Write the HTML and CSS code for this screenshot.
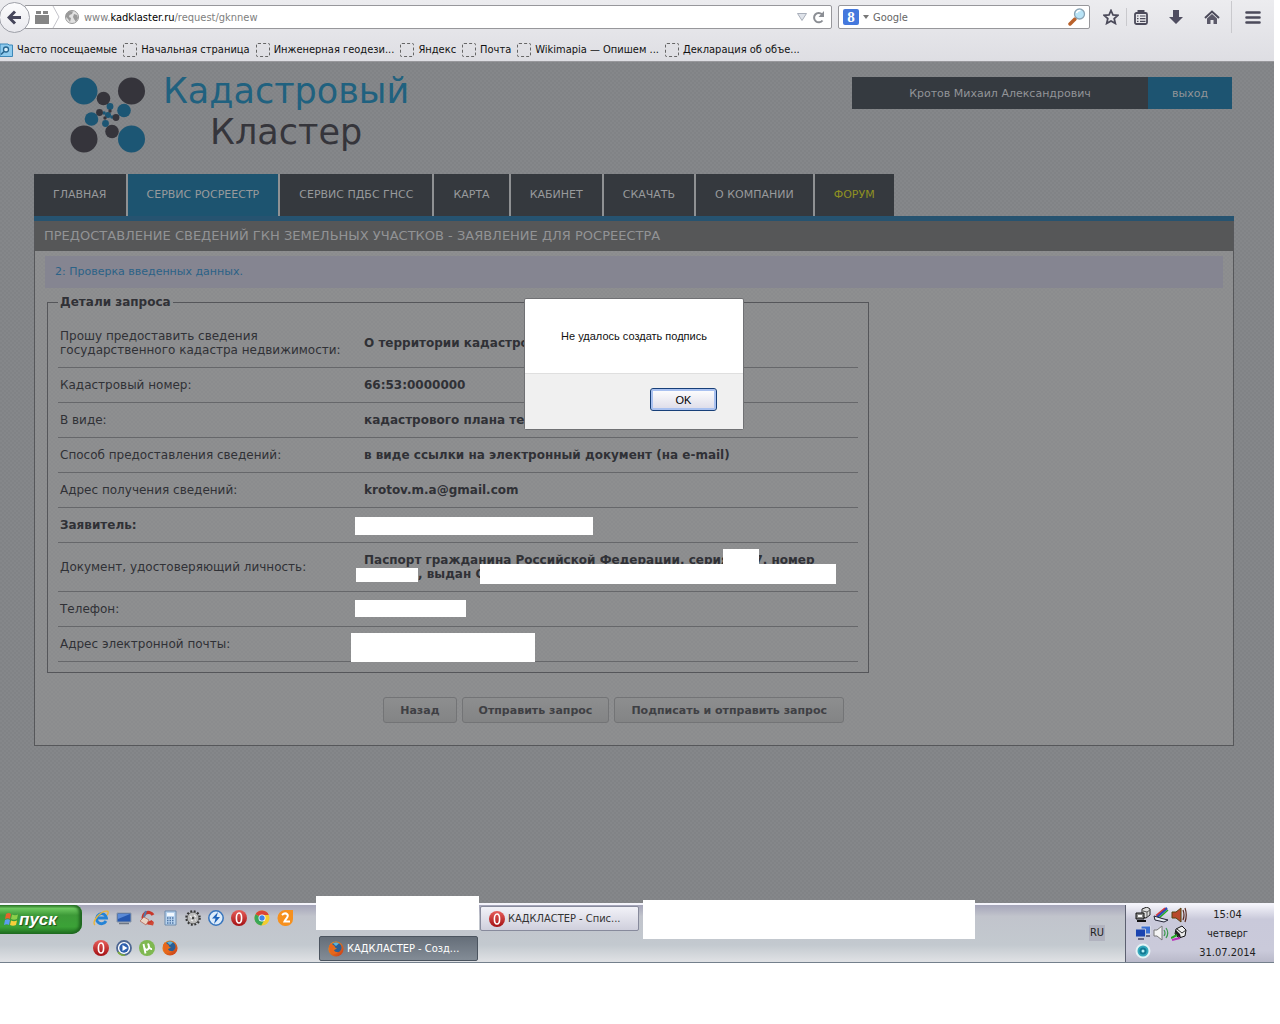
FILE: index.html
```html
<!DOCTYPE html>
<html lang="ru">
<head>
  <meta charset="UTF-8">
  <meta name="viewport" content="width=device-width, initial-scale=1.0">
  <title>Кадастровый Кластер</title>
  <link rel="stylesheet" href="styles.css">
</head>
<body>

  <!-- shapes used more than once -->
  <svg class="defs" width="0" height="0" aria-hidden="true">
    <defs>
      <linearGradient id="redShade" x1="0" y1="0" x2="0" y2="1">
        <stop offset="0" stop-color="#e8605c"/>
        <stop offset="1" stop-color="#a30f12"/>
      </linearGradient>
      <linearGradient id="foxShade" x1="0" y1="0" x2="1" y2="1">
        <stop offset="0" stop-color="#f4a21f"/>
        <stop offset="1" stop-color="#c9361a"/>
      </linearGradient>
      <symbol id="opera" viewBox="0 0 16 16">
        <circle cx="8" cy="8" r="8" fill="url(#redShade)"/>
        <ellipse cx="8" cy="8" rx="2.6" ry="5" fill="none" stroke="#fff" stroke-width="1.6"/>
      </symbol>
      <symbol id="firefox" viewBox="0 0 16 16">
        <circle cx="8" cy="8" r="7.6" fill="url(#foxShade)"/>
        <path d="M4 3C7 .2 13 1.500 13.500 6c.3 3-2 5.500-5 5.300C6 11 5.500 9 7 8.500L9 7.800 6.500 6z" fill="#2c5f94"/>
        <path d="M5 2.500q3-2 6 0L8 5z" fill="#5fb4d8"/>
        <path d="M1 5l2-3 1.500 2L7 5 5.500 7.500C5 10 7 11.500 10 11c-2 3-7 2.500-8.500-1z" fill="#e8661b"/>
      </symbol>
    </defs>
  </svg>

  <div class="screen">

    <header class="browser">
      <div class="toolbar">
        <button class="back" aria-label="Назад">
          <svg width="15" height="15" viewBox="0 0 15 15"><path d="M8 1.500L2 7.500l6 6M2.500 7.500H14" fill="none" stroke="#45455a" stroke-width="3"/></svg>
        </button>
        <div class="urlbar">
          <svg class="tabs-icon" width="14" height="13" viewBox="0 0 14 13"><path d="M1 0h5v3H1zM8 0h5v3H8zM0 4h14v9H0z" fill="#858585"/></svg>
          <svg width="8" height="22" viewBox="0 0 8 22"><path d="M1 0l6 11-6 11" fill="none" stroke="#c4c4ca"/></svg>
          <svg width="14" height="14" viewBox="0 0 14 14"><circle cx="7" cy="7" r="6.500" fill="#e1e1e1" stroke="#999"/><path d="M1 4l3-3 4 .5L7 4 4.500 5 4 7l2 1-1 4-2-3-2-2zM9 4l3 1 1 3-2 4-2-3-1-2z" fill="#999"/></svg>
          <span class="address">www.<b>kadklaster.ru</b>/request/gknnew</span>
          <svg width="10" height="8" viewBox="0 0 10 8"><path d="M.5.500h9L5 7.500z" fill="#dfe3ea" stroke="#a9afba"/></svg>
          <button class="plain" aria-label="Обновить">
            <svg width="13" height="13" viewBox="0 0 13 13"><path d="M10.500 9.500A4.700 4.700 0 1 1 10 3.200" fill="none" stroke="#8b8e94" stroke-width="2"/><path d="M12 0v6H6.500z" fill="#8b8e94"/></svg>
          </button>
        </div>
        <div class="search">
          <span class="engine">8</span>
          <svg width="6" height="4" viewBox="0 0 6 4"><path d="M0 0h6L3 4z" fill="#777"/></svg>
          <input type="text" placeholder="Google" aria-label="Поиск">
          <svg width="18" height="18" viewBox="0 0 18 18"><path d="M2 16l5-5" stroke="#b9612b" stroke-width="3.500" stroke-linecap="round"/><circle cx="11.500" cy="6" r="5" fill="#b8e3f6" stroke="#8ba4b5" stroke-width="1.300"/><path d="M8.500 5q1-3 4-2.500" fill="none" stroke="#fff" stroke-width="1.500"/></svg>
        </div>
        <div class="tools">
          <button class="plain" aria-label="Закладка"><svg width="16" height="16" viewBox="0 0 16 16"><path d="M8 1.500l2 4.500 4.800.4-3.600 3.200 1.100 4.800L8 12l-4.300 2.400 1.100-4.800L1.200 6.400 6 6z" fill="none" stroke="#4b4a5a" stroke-width="1.800"/></svg></button>
          <span class="divider"></span>
          <button class="plain spaced" aria-label="Список закладок"><svg width="14" height="15" viewBox="0 0 14 15"><path d="M4.500 2.500V1h5v1.500" fill="none" stroke="#4b4a5a" stroke-width="2"/><rect x="1" y="3" width="12" height="11" rx="1.500" fill="none" stroke="#4b4a5a" stroke-width="1.800"/><path d="M3 6h1.500M6 6h5.500M3 8.700h1.500M6 8.700h5.500M3 11.400h1.500M6 11.400h5.500" stroke="#4b4a5a" stroke-width="1.200"/></svg></button>
          <button class="plain spaced" aria-label="Загрузки"><svg width="14" height="15" viewBox="0 0 14 15"><path d="M4 0h6v7h4l-7 7-7-7h4z" fill="#4f4d60"/></svg></button>
          <button class="plain" aria-label="Домой"><svg width="16" height="15" viewBox="0 0 16 15"><path d="M1 8l7-6.500L15 8" fill="none" stroke="#4b4a5a" stroke-width="2"/><path d="M3 8.500L8 4l5 4.500V14H9.500v-4h-3v4H3z" fill="#5b5969"/></svg></button>
          <span class="divider tall"></span>
          <button class="plain" aria-label="Меню"><svg width="16" height="13" viewBox="0 0 16 13"><path d="M1.500 1.500h13M1.500 6.500h13M1.500 11.500h13" stroke="#4b4a5a" stroke-width="2.600" stroke-linecap="round"/></svg></button>
        </div>
      </div>
      <nav class="bookmarks">
        <a href="#"><svg width="13" height="14" viewBox="0 0 13 14"><path d="M0 1h8l1 1h3.500v11.500H0z" fill="#8fcbee" stroke="#3d88b8"/><circle cx="6" cy="6.500" r="2.500" fill="#d9f0fb" stroke="#27658f" stroke-width="1.300"/><path d="M4 8.500L1 11.500" stroke="#27658f" stroke-width="1.600"/></svg>Часто посещаемые</a>
        <a href="#"><i></i>Начальная страница</a>
        <a href="#"><i></i>Инженерная геодези...</a>
        <a href="#"><i></i>Яндекс</a>
        <a href="#"><i></i>Почта</a>
        <a href="#"><i></i>Wikimapia — Опишем ...</a>
        <a href="#"><i></i>Декларация об объе...</a>
      </nav>
    </header>

    <main class="page">
      <div class="top">
        <a class="logo" href="#">
          <svg width="76" height="76" viewBox="0 0 76 76">
            <g fill="#1c5674">
              <circle cx="14" cy="14" r="13.500"/><circle cx="61.500" cy="62" r="13.500"/>
              <circle cx="54" cy="33.500" r="6.800"/><circle cx="21.500" cy="42" r="6.800"/>
              <circle cx="40" cy="29.500" r="3.400"/><circle cx="35.500" cy="46.500" r="3.400"/>
              <circle cx="38" cy="38" r="3"/><circle cx="34" cy="36" r="1.800"/><circle cx="42" cy="40" r="1.800"/>
            </g>
            <g fill="#35343b">
              <circle cx="61.500" cy="14" r="13.500"/><circle cx="14" cy="62" r="13.500"/>
              <circle cx="33.500" cy="21.500" r="6.800"/><circle cx="42" cy="54.500" r="6.800"/>
              <circle cx="29.500" cy="35.500" r="3.400"/><circle cx="46" cy="40.500" r="3.400"/>
              <circle cx="40" cy="34" r="1.700"/><circle cx="35" cy="41" r="1.700"/>
            </g>
          </svg>
          <span class="brand"><span class="blue">Кадастровый</span><span>Кластер</span></span>
        </a>
        <div class="user">
          <span class="name">Кротов Михаил Александрович</span>
          <a href="#">выход</a>
        </div>
      </div>

      <nav class="menu">
        <a href="#">Главная</a>
        <a class="active" href="#">Сервис Росреестр</a>
        <a href="#">Сервис ПДБС ГНСС</a>
        <a href="#">Карта</a>
        <a href="#">Кабинет</a>
        <a href="#">Скачать</a>
        <a href="#">О компании</a>
        <a class="forum" href="#">Форум</a>
      </nav>

      <section class="panel">
        <h1>Предоставление сведений ГКН земельных участков - Заявление для Росреестра</h1>
        <p class="step">2: Проверка введенных данных.</p>
        <form class="request">
          <fieldset>
            <legend>Детали запроса</legend>
            <table>
              <tr><th>Прошу предоставить сведения<br>государственного кадастра недвижимости:</th><td>О территории кадастрового</td></tr>
              <tr><th>Кадастровый номер:</th><td>66:53:0000000</td></tr>
              <tr><th>В виде:</th><td>кадастрового плана тер</td></tr>
              <tr><th>Способ предоставления сведений:</th><td>в виде ссылки на электронный документ (на e-mail)</td></tr>
              <tr><th>Адрес получения сведений:</th><td>krotov.m.a@gmail.com</td></tr>
              <tr><th class="strong">Заявитель:</th><td><span class="hide person"></span></td></tr>
              <tr><th>Документ, удостоверяющий личность:</th><td>Паспорт гражданина Российской Федерации, серия <span class="series">7</span>, номер<br><span class="number"></span>, выдан О<span class="hide s1"></span><span class="hide s2"></span><span class="hide s3"></span></td></tr>
              <tr><th>Телефон:</th><td><span class="hide phone"></span></td></tr>
              <tr><th>Адрес электронной почты:</th><td><span class="hide mail"></span></td></tr>
            </table>
          </fieldset>
          <div class="actions">
            <button type="button">Назад</button>
            <button type="button">Отправить запрос</button>
            <button type="button">Подписать и отправить запрос</button>
          </div>
        </form>
      </section>

      <div class="overlay">
        <div class="alert" role="alertdialog" aria-labelledby="alertText">
          <p id="alertText">Не удалось создать подпись</p>
          <div class="alert-foot"><button type="button">OK</button></div>
        </div>
      </div>
    </main>

    <footer class="taskbar">
      <button class="start">
        <svg width="15" height="15" viewBox="0 0 15 15"><path d="M2 2q3-2 5 0L6 7Q4 5.500 1 7z" fill="#e8622c"/><path d="M8 2.500q3 1.500 6 0L13 7q-3 1.500-6 0z" fill="#8ccf4a"/><path d="M1 8q3-1.500 5 0l-1 5Q3 11.500 0 13z" fill="#5b9df0"/><path d="M7 8.500q3 1.500 6 0l-1 4.500q-3 1.500-6 0z" fill="#f7cf3b"/></svg>пуск
      </button>
      <div class="quick">
        <a href="#" aria-label="Internet Explorer"><svg viewBox="0 0 16 16"><path d="M13 11A5 5 0 1 1 13.500 8H5" fill="none" stroke="#2483d6" stroke-width="2.800"/><path d="M2 15C-2 12 8 0 14.500 1.200c1.200.8.5 2.800-.5 4" fill="none" stroke="#e9b53a" stroke-width="1.400"/></svg></a>
        <a href="#" aria-label="Рабочий стол"><svg viewBox="0 0 16 16"><path d="M1 3h14v9H1z" fill="#2658b0" stroke="#8d99a8"/><path d="M2 4h12L2 9z" fill="#5b8ad6"/><path d="M3 13.500h10" stroke="#6e7784" stroke-width="1.500"/></svg></a>
        <a href="#" aria-label="CCleaner"><svg viewBox="0 0 16 16"><path d="M14 5A5.300 5.300 0 1 0 13.500 11" fill="none" stroke="#c8372b" stroke-width="3.200"/><path d="M7 1L5 7" stroke="#5078ad" stroke-width="2"/><path d="M1 11l4-4 5 3-3 5z" fill="#e9d3c4" stroke="#b5685a" stroke-width=".8"/><path d="M9 14.500l4-3 2 1-1 3z" fill="#cf4936"/></svg></a>
        <a href="#" aria-label="Калькулятор"><svg viewBox="0 0 16 16"><path d="M3 1h11v14H3z" fill="#b9d3ee" stroke="#6d8bad"/><path d="M5 3h7v3H5z" fill="#f2f8ff"/><path d="M5 8h7M5 10.500h7M5 13h7" stroke="#4e75a6" stroke-width="1.500" stroke-dasharray="1.500 1"/></svg></a>
        <a href="#" aria-label="Настройки"><svg viewBox="0 0 16 16"><circle cx="8" cy="8" r="6.500" fill="none" stroke="#333" stroke-width="2.500" stroke-dasharray="1.800 1.600"/><circle cx="8" cy="8" r="5.800" fill="#bdbdbd" stroke="#555" stroke-width=".8"/><path d="M5 6l2 2M9 5l2 2M6 10l2 1M10 10h1" stroke="#eee" stroke-width="1.200"/><circle cx="8" cy="8" r="1.200" fill="#444"/></svg></a>
        <a href="#" aria-label="Daemon Tools"><svg viewBox="0 0 16 16"><circle cx="8" cy="8" r="7.200" fill="#dcebfa" stroke="#3674bd" stroke-width="1.500"/><path d="M10 2L4 8.500h3.500L6 14l6-7H8.500z" fill="#1d63bb"/></svg></a>
        <a href="#" aria-label="Opera"><svg viewBox="0 0 16 16"><use href="#opera"/></svg></a>
        <a href="#" aria-label="Chrome"><svg viewBox="0 0 16 16"><circle cx="8" cy="8" r="7.500" fill="#f3cc30"/><path d="M8 8L1.500 4.200A7.500 7.500 0 0 1 14.800 5H8z" fill="#db4437"/><path d="M8 8L1.500 4.200A7.500 7.500 0 0 0 7.300 15.500L10.500 9.500z" fill="#3aa757"/><circle cx="8" cy="8" r="3.500" fill="#fff"/><circle cx="8" cy="8" r="2.700" fill="#3f83e8"/></svg></a>
        <a href="#" aria-label="2GIS"><svg viewBox="0 0 16 16"><path d="M8 0h8v9a7 7 0 0 1-7 7A8 8 0 1 1 8 0z" fill="#f6901e"/><path d="M5 5q3-3 5.500-.5C12 7 9 8 7.500 11.500H13" fill="none" stroke="#fff" stroke-width="2"/></svg></a>
        <a href="#" aria-label="Opera"><svg viewBox="0 0 16 16"><use href="#opera"/></svg></a>
        <a href="#" aria-label="Проигрыватель"><svg viewBox="0 0 16 16"><circle cx="8" cy="8" r="7" fill="#fff" stroke="#4e6792" stroke-width="1.800"/><circle cx="8" cy="8" r="4.700" fill="#2d5fae"/><path d="M6.500 5l5 3-5 3z" fill="#fff"/><path d="M2 12a7 7 0 0 0 7 3" fill="none" stroke="#7fae3b" stroke-width="1.500"/></svg></a>
        <a href="#" aria-label="uTorrent"><svg viewBox="0 0 16 16"><circle cx="8" cy="8" r="8" fill="#7fb851"/><path d="M4.500 4l2 9.500M5 6.500Q6 10.500 8.500 9.500T9 3.500M9.500 4q.5 5.500 3.500 5" fill="none" stroke="#fff" stroke-width="1.900"/></svg></a>
        <a href="#" aria-label="Firefox"><svg viewBox="0 0 16 16"><use href="#firefox"/></svg></a>
      </div>
      <div class="tasks">
        <button class="task second"><svg width="16" height="16"><use href="#opera"/></svg>КАДКЛАСТЕР - Спис...</button>
        <button class="task current"><svg width="16" height="16"><use href="#firefox"/></svg>КАДКЛАСТЕР - Созд...</button>
        <span class="hide t1"></span>
        <span class="hide t2"></span>
      </div>
      <span class="lang">RU</span>
      <div class="tray">
        <div class="tray-icons">
          <svg viewBox="0 0 16 16"><path d="M7 2l5-2 3 2v6l-4 3-4-1z" fill="#ddd" stroke="#222"/><path d="M8 4l4 1 3-2M12 5v5" fill="none" stroke="#555"/><path d="M1 6h8v6H1z" fill="#888" stroke="#111"/><path d="M3 8h4v2H3z" fill="#fff"/><path d="M2 14h9" stroke="#111" stroke-width="2"/></svg>
          <svg viewBox="0 0 16 16"><path d="M14 1L4 10" stroke="#2d49bb" stroke-width="2.500"/><path d="M12 1L3 8.500" stroke="#d33" stroke-width="1.500"/><path d="M15 3L6 11" stroke="#2a2" stroke-width="1.500"/><path d="M1 9l8 2.500 6 1.500-4 2-9-2z" fill="#e8eef5" stroke="#223"/></svg>
          <svg viewBox="0 0 16 16"><path d="M1 5h4l5-4v14l-5-4H1z" fill="#b8482b" stroke="#541"/><path d="M12 3q2 5 0 10M14 1q2.500 7 0 14" fill="none" stroke="#5b2a20" stroke-width="1.200"/></svg>
          <svg viewBox="0 0 16 16"><path d="M6 1h9.500v8H6z" fill="#3b6fd2" stroke="#d5d9e5"/><path d="M.5 4h10v8H.5z" fill="#1b43b0" stroke="#c3cad9"/><path d="M3 14h6M11 11h4" stroke="#446" stroke-width="1.600"/></svg>
          <svg viewBox="0 0 16 16"><path d="M1 5h3l5-4v14l-5-4H1z" fill="#f4f4f4" stroke="#777"/><path d="M11 5q2 3 0 6M13 3q3.500 5 0 10" fill="none" stroke="#3a9a4b" stroke-width="1.200"/></svg>
          <svg viewBox="0 0 16 16"><path d="M5 4l6-3 4 4-1 6-6 2-4-4z" fill="#eee" stroke="#111"/><path d="M5 5l4 4 1 4-6-3z" fill="#222"/><path d="M6 4l5 4 4-3" fill="none" stroke="#333"/><path d="M0 13l6-3" stroke="#2a2" stroke-width="2"/><path d="M1 15l8-2" stroke="#b3b" stroke-width="2"/></svg>
          <svg viewBox="0 0 16 16"><circle cx="8" cy="8" r="6.500" fill="#35a9bd" stroke="#e4f3f6" stroke-width="2"/><circle cx="8" cy="8" r="3.500" fill="#117a94"/><circle cx="8" cy="8" r="1.500" fill="#b8eff5"/></svg>
        </div>
        <div class="clock"><span>15:04</span><span>четверг</span><span>31.07.2014</span></div>
      </div>
    </footer>

  </div>

</body>
</html>
```
FILE: styles.css
```css
* {
  box-sizing: border-box;
}

body {
  margin: 0;
  background-color: #fff;
  font-family: "DejaVu Sans", Verdana, sans-serif;
  font-size: 12px;
  color: #303136;
}

a {
  color: inherit;
  text-decoration: none;
}

button,
input {
  font-family: inherit;
}

svg {
  flex: none;
}

.defs {
  position: absolute;
}

.screen {
  margin-right: 6px;
}

/* Browser chrome */
.browser {
  height: 62px;
  background: linear-gradient(#ececef, #dedee3);
  border-bottom: 1px solid #98989c;
  font-family: "DejaVu Sans Condensed", "DejaVu Sans", Tahoma, sans-serif;
  font-size: 11px;
  color: #111;
}

.toolbar {
  display: flex;
  align-items: center;
  height: 34px;
}

.back {
  display: flex;
  align-items: center;
  justify-content: center;
  flex: none;
  width: 31px;
  height: 31px;
  margin-left: -1px;
  padding: 0;
  border: 1px solid #9ea0a8;
  border-radius: 50%;
  background: linear-gradient(#fcfcfd, #e9e9ee);
  z-index: 1;
}

.plain {
  display: flex;
  padding: 0;
  border: 0;
  background: none;
}

.urlbar,
.search {
  display: flex;
  align-items: center;
  height: 24px;
  border: 1px solid #97979b;
  border-radius: 2px;
  background-color: #fff;
}

.urlbar {
  flex: 1;
  gap: 5px;
  margin-left: -6px;
  padding: 0 6px 0 10px;
}

.urlbar .tabs-icon {
  margin-right: -2px;
}

.address {
  flex: 1;
  color: #808080;
}

.address b {
  font-weight: normal;
  color: #000;
}

.search {
  gap: 4px;
  width: 252px;
  margin-left: 6px;
  padding: 0 3px 0 4px;
}

.search input {
  flex: 1;
  min-width: 0;
  padding: 0;
  border: 0;
  font-size: 11px;
}

.search input::placeholder {
  color: #666;
}

.engine {
  width: 16px;
  height: 16px;
  border-radius: 2px;
  background-color: #4478dd;
  color: #fff;
  font: bold 15px/16px "Liberation Serif", serif;
  text-align: center;
}

.tools {
  display: flex;
  align-items: center;
  gap: 7px;
  width: 184px;
  padding-left: 13px;
}

.tools .spaced {
  margin-right: 14px;
}

.divider {
  width: 1px;
  height: 18px;
  background-color: #c9c9cd;
}

.divider.tall {
  height: 32px;
  margin: 0 6px 0 4px;
}

.bookmarks {
  display: flex;
  gap: 6px;
  height: 27px;
  padding-top: 4px;
}

.bookmarks a {
  display: flex;
  align-items: center;
  gap: 4px;
  white-space: nowrap;
}

.bookmarks i {
  width: 14px;
  height: 14px;
  border: 1px dashed #666;
  border-radius: 2px;
}

/* Site */
.page {
  position: relative;
  min-height: 841px;
  padding: 12px 40px 0 34px;
  background: repeating-conic-gradient(#85878a 0 25%, #818386 0 50%) 0 0 / 4px 4px;
}

.top {
  display: flex;
  align-items: flex-start;
  justify-content: space-between;
  height: 100px;
  padding: 3px 2px 0 36px;
}

.logo {
  display: flex;
  gap: 17px;
}

.brand {
  display: flex;
  flex-direction: column;
  align-items: center;
  margin-top: -6px;
  font-size: 35px;
  line-height: 41px;
  color: #35353b;
}

.brand .blue {
  color: #20617f;
}

.user {
  display: flex;
  height: 32px;
  line-height: 33px;
  font-size: 11px;
  color: #929498;
  text-align: center;
}

.user .name {
  width: 296px;
  background-color: #353a40;
}

.user a {
  width: 84px;
  background-color: #1d5471;
}

.menu {
  display: flex;
  gap: 2px;
  border-bottom: 5px solid #265370;
}

.menu a {
  padding: 0 19px;
  background-color: #35393e;
  color: #989a9c;
  font-size: 11px;
  line-height: 42px;
  text-transform: uppercase;
  box-shadow: 2px 0 #8f9193;
}

.menu a.active {
  background-color: #1d5470;
}

.menu a.forum {
  color: #8f9022;
  box-shadow: none;
}

.panel {
  min-height: 525px;
  border: 1px solid #56575a;
  border-top: 0;
  background: repeating-conic-gradient(#8e8f90 0 25%, #8b8c8e 0 50%) 0 0 / 4px 4px;
}

.panel h1 {
  margin: 0;
  padding-left: 9px;
  background-color: #565758;
  color: #929395;
  font-size: 13px;
  font-weight: normal;
  line-height: 30px;
  text-transform: uppercase;
}

.step {
  margin: 5px 10px 7px;
  padding-left: 10px;
  background-color: #858591;
  color: #2b6287;
  font-size: 11px;
  line-height: 32px;
}

.request {
  width: 822px;
  margin-left: 12px;
}

fieldset {
  margin: 0;
  padding: 10px;
  border: 1px solid #55565a;
}

legend {
  padding: 0 2px;
  font-weight: bold;
  line-height: 14px;
}

table {
  width: 100%;
  border-collapse: collapse;
}

th,
td {
  position: relative;
  height: 35px;
  padding: 10px 2px;
  border-bottom: 1px solid #66676a;
  line-height: 14px;
  text-align: left;
  white-space: nowrap;
}

th {
  width: 304px;
  font-weight: normal;
}

th.strong,
td {
  font-weight: bold;
}

.series {
  display: inline-block;
  width: 30px;
  text-align: right;
}

.number {
  display: inline-block;
  width: 54px;
}

/* Blanked out areas */
.hide {
  position: absolute;
  background-color: #fff;
}

.person {
  left: -7px;
  top: 9px;
  width: 238px;
  height: 18px;
}

.s1 {
  left: 361px;
  top: 6px;
  width: 36px;
  height: 18px;
}

.s2 {
  left: 118px;
  top: 21px;
  width: 356px;
  height: 20px;
}

.s3 {
  left: -6px;
  top: 25px;
  width: 62px;
  height: 14px;
}

.phone {
  left: -7px;
  top: 8px;
  width: 111px;
  height: 17px;
}

.mail {
  left: -11px;
  top: 6px;
  width: 184px;
  height: 29px;
}

.actions {
  display: flex;
  justify-content: flex-end;
  gap: 5px;
  padding: 24px 25px 0 0;
}

.actions button {
  height: 26px;
  padding: 0 16px;
  border: 1px solid #737476;
  border-radius: 3px;
  background: linear-gradient(#8d8e8f, #838485);
  color: #3f4044;
  font-size: 11px;
  font-weight: bold;
}

.overlay {
  position: absolute;
  inset: 0;
  display: flex;
  align-items: flex-start;
  justify-content: center;
  padding: 236px 6px 0 0;
}

.alert {
  width: 220px;
  border: 1px solid #707174;
  border-radius: 2px;
  background-color: #fff;
  color: #111;
  font-family: "Liberation Sans", Arial, sans-serif;
  font-size: 11px;
}

.alert p {
  margin: 0;
  line-height: 74px;
  text-align: center;
}

.alert-foot {
  display: flex;
  justify-content: flex-end;
  padding: 14px 26px 18px;
  border-top: 1px solid #dfdfdf;
  background-color: #f0f0f0;
}

.alert button {
  width: 67px;
  height: 23px;
  padding: 0;
  border: 1px solid #173f78;
  border-radius: 3px;
  background: linear-gradient(#fff, #dcdbe8);
  box-shadow: inset 0 0 0 2px #a9c1f0;
  font-size: 11px;
}

/* Taskbar */
.taskbar {
  display: flex;
  align-items: flex-start;
  height: 60px;
  border-top: 2px solid #f4f4fb;
  border-bottom: 1px solid #74808c;
  background: linear-gradient(#a5a5b9, #c1c4cc 20%, #c3c9cf 70%, #e0e2e5);
  font-family: "DejaVu Sans Condensed", "DejaVu Sans", Tahoma, sans-serif;
  font-size: 11px;
  color: #222;
}

.start {
  display: flex;
  align-items: center;
  width: 82px;
  height: 29px;
  padding: 0 0 0 4px;
  border: 0;
  border-radius: 0 8px 10px 0;
  background: linear-gradient(#2f7d2c, #6cc75f 12%, #3d9a38 35%, #3ba237 75%, #1f6d1f);
  box-shadow: inset -3px 0 3px #1f6520;
  color: #fff;
  font: italic bold 17px "Liberation Sans", Arial, sans-serif;
  text-shadow: 1px 1px 1px #234d20;
}

.quick {
  display: grid;
  grid-template-columns: repeat(9, 23px);
  grid-auto-rows: 30px;
  width: 225px;
  margin-left: 8px;
  padding-left: 3px;
}

.quick a {
  padding-top: 5px;
}

.quick svg {
  display: block;
  width: 16px;
  height: 16px;
}

.tasks {
  position: relative;
  display: grid;
  grid-template-columns: 159px 159px;
  grid-auto-rows: 25px;
  gap: 5px 2px;
  flex: 1;
  padding: 1px 0 0 4px;
}

.task {
  display: flex;
  align-items: center;
  gap: 3px;
  padding: 0 8px;
  border: 1px solid #878a9c;
  border-radius: 2px;
  background: linear-gradient(#f2f2f8, #cfcfdc);
  color: #333;
  font-size: 11px;
  white-space: nowrap;
}

.task.second {
  grid-column: 2;
}

.task.current {
  grid-column: 1;
  border-color: #4b545f;
  background: linear-gradient(#656e79, #838c96);
  color: #fff;
}

.t1 {
  left: 1px;
  top: -9px;
  width: 163px;
  height: 34px;
}

.t2 {
  left: 328px;
  top: -5px;
  width: 332px;
  height: 39px;
}

.lang {
  margin: 20px 20px 0 0;
  padding: 0 1px;
  background-color: #b1b3bf;
  line-height: 16px;
}

.tray {
  display: flex;
  width: 149px;
  height: 57px;
  padding: 0 8px 0 9px;
  border-left: 1px solid #5c6070;
  background: linear-gradient(#f2f2f9, #c9c9da 25%, #cacada 80%, #b9b9ca);
}

.tray-icons {
  display: grid;
  grid-template-columns: repeat(3, 18px);
  grid-auto-rows: 18px;
  padding-top: 2px;
}

.tray-icons svg {
  width: 16px;
  height: 16px;
}

.clock {
  display: flex;
  flex-direction: column;
  flex: 1;
  line-height: 19px;
  text-align: center;
}
```
